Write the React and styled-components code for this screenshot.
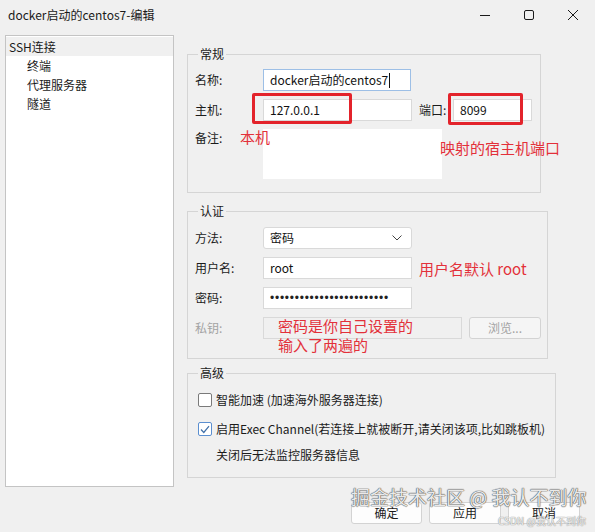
import React from "react";
import styled, { createGlobalStyle } from "styled-components";

const GlobalStyle = createGlobalStyle`
  html, body { margin: 0; padding: 0; background: #f0f0f0; }
  body { font-family: "Noto Sans CJK SC", "Noto Sans", sans-serif; font-size: 12px; color: #1b1b1b; }
  * { box-sizing: border-box; }
`;

const Window = styled.div`
  position: relative;
  width: 595px;
  height: 532px;
  background: #f0f0f0;
  overflow: hidden;
  border-top-right-radius: 8px;
`;

const TitleBar = styled.div`
  height: 30px;
  display: flex;
  align-items: center;
  padding-left: 8px;
`;

const Title = styled.div`
  flex: 1;
  font-size: 12px;
  line-height: 16px;
  color: #1a1a1a;
`;

const Controls = styled.div`
  display: flex;
  align-items: center;
  height: 30px;
`;

const CtrlBtn = styled.div`
  width: 44px;
  height: 30px;
  display: flex;
  align-items: center;
  justify-content: center;
`;

const Body = styled.div`
  display: flex;
  padding: 5px 0 0 5px;
`;

const Tree = styled.div`
  width: 169px;
  height: 452px;
  background: #fff;
  border: 1px solid #c4c4c4;
  padding-top: 1px;
`;

const TreeItem = styled.div`
  height: 19px;
  line-height: 19px;
  font-size: 12px;
  padding-left: ${(p) => (p.$child ? 21 : 3)}px;
  background: ${(p) => (p.$selected ? "#f0f0f0" : "transparent")};
`;

const Right = styled.div`
  margin-left: 13px;
  padding-top: 11px;
  display: flex;
  flex-direction: column;
`;

const Group = styled.fieldset`
  margin: ${(p) => p.$mt || 0}px 0 0 0;
  padding: 0 ${(p) => p.$pr || 0}px ${(p) => p.$pb}px ${(p) => p.$pl || 7}px;
  border: 1px solid #d5d5d5;
  width: ${(p) => p.$w}px;
  min-width: 0;
`;

const Legend = styled.legend`
  margin-left: 3px;
  padding: 0 2px;
  font-size: 12px;
  line-height: 16px;
  color: #1b1b1b;
`;

const Rows = styled.div`
  display: flex;
  flex-direction: column;
  gap: ${(p) => p.$gap || 8}px;
  padding-top: ${(p) => p.$pt || 7}px;
`;

const Row = styled.div`
  position: relative;
  display: flex;
  align-items: ${(p) => (p.$top ? "flex-start" : "center")};
  height: ${(p) => p.$h || 22}px;
`;

const Label = styled.div`
  width: 68px;
  flex: none;
  font-size: 12px;
  line-height: 16px;
  color: ${(p) => (p.$disabled ? "#a3a3a3" : "#1b1b1b")};
  margin-top: ${(p) => p.$mt || 0}px;
`;

const SideLabel = styled(Label)`
  width: 34px;
  margin-left: 7px;
`;

const Field = styled.div`
  width: ${(p) => p.$w}px;
  height: ${(p) => p.$h || 22}px;
  flex: none;
  background: ${(p) => (p.$disabled ? "#f0f0f0" : "#fff")};
  border: ${(p) => (p.$borderless ? "none" : `1px solid ${p.$focus ? "#9dbfe6" : "#d9d9d9"}`)};
  border-radius: ${(p) => (p.$round ? 3 : 0)}px;
  display: flex;
  align-items: center;
  padding-left: 6px;
  padding-right: 8px;
  font-size: 12px;
  line-height: 16px;
  color: #111;
`;

const Caret = styled.span`
  display: inline-block;
  width: 1px;
  height: 15px;
  background: #111;
  margin-left: 1px;
`;

const Chevron = styled.svg`
  margin-left: auto;
`;

const Dots = styled.span`
  font-family: "Liberation Sans", Arial, sans-serif;
  font-size: 12px;
  letter-spacing: 0.75px;
  color: #222;
`;

const Button = styled.div`
  width: ${(p) => p.$w || 72}px;
  height: 22px;
  flex: none;
  border: 1px solid #d3d3d3;
  border-radius: 3px;
  background: ${(p) => (p.$disabled ? "#f5f5f5" : "#fdfdfd")};
  color: ${(p) => (p.$disabled ? "#a3a3a3" : "#1b1b1b")};
  display: flex;
  align-items: center;
  justify-content: center;
  font-size: 12px;
  line-height: 16px;
  margin-left: ${(p) => p.$ml || 0}px;
`;

const RedBox = styled.div`
  position: absolute;
  left: ${(p) => p.$x}px;
  top: ${(p) => p.$y}px;
  width: ${(p) => p.$w}px;
  height: ${(p) => p.$h}px;
  border: 3px solid #e3232b;
  border-radius: 2px;
  pointer-events: none;
`;

const Note = styled.div`
  position: absolute;
  left: ${(p) => p.$x}px;
  top: ${(p) => p.$y}px;
  font-size: 15px;
  line-height: 19px;
  color: #e3303a;
  white-space: nowrap;
`;

const InlineNote = styled.div`
  margin-left: 7px;
  font-size: 15px;
  line-height: 19px;
  color: #e3303a;
  white-space: nowrap;
`;

const CheckList = styled.div`
  padding-top: 9px;
`;

const CheckRow = styled.div`
  display: flex;
  align-items: center;
  height: 20px;
  padding-left: ${(p) => (p.$indent ? 21 : 3)}px;
  margin-top: ${(p) => p.$mt || 0}px;
  font-size: 12px;
  line-height: 16px;
`;

const Box = styled.div`
  width: 14px;
  height: 14px;
  border: 1px solid ${(p) => (p.$checked ? "#5b8fd0" : "#7a7a7a")};
  border-radius: 2px;
  background: #fff;
  margin-right: 4px;
  display: flex;
  align-items: center;
  justify-content: center;
`;

const ButtonBar = styled.div`
  display: flex;
  gap: 7px;
  padding-left: 164px;
  margin-top: 24px;
`;

const Watermark = styled.div`
  position: absolute;
  left: 351px;
  top: 485px;
  font-size: 19px;
  line-height: 24px;
  color: rgba(255, 255, 255, 0.88);
  text-shadow: 0 0 1px #555, 0 0 1px #555, 0 0 1px #666;
  white-space: nowrap;
  pointer-events: none;
`;

const SmallMark = styled.div`
  position: absolute;
  left: 498px;
  top: 514px;
  font-size: 10px;
  line-height: 14px;
  color: rgba(255, 255, 255, 0.85);
  text-shadow: 0 0 1px #888, 0 0 1px #999;
  white-space: nowrap;
  pointer-events: none;
`;

export default function App() {
  return (
    <>
      <GlobalStyle />
      <Window>
        <TitleBar>
          <Title>docker启动的centos7-编辑</Title>
          <Controls>
            <CtrlBtn>
              <svg width="12" height="12" viewBox="0 0 12 12">
                <path d="M1 6.5h10" stroke="#1a1a1a" strokeWidth="1" />
              </svg>
            </CtrlBtn>
            <CtrlBtn>
              <svg width="12" height="12" viewBox="0 0 12 12">
                <rect x="1.5" y="1.5" width="9" height="9" rx="1.5" fill="none" stroke="#1a1a1a" strokeWidth="1" />
              </svg>
            </CtrlBtn>
            <CtrlBtn>
              <svg width="12" height="12" viewBox="0 0 12 12">
                <path d="M1 1l10 10M11 1L1 11" stroke="#1a1a1a" strokeWidth="1" />
              </svg>
            </CtrlBtn>
          </Controls>
        </TitleBar>
        <Body>
          <Tree>
            <TreeItem $selected>SSH连接</TreeItem>
            <TreeItem $child>终端</TreeItem>
            <TreeItem $child>代理服务器</TreeItem>
            <TreeItem $child>隧道</TreeItem>
          </Tree>
          <Right>
            <Group $w={354} $pb={13}>
              <Legend>常规</Legend>
              <Rows>
                <Row>
                  <Label>名称:</Label>
                  <Field $w={148} $focus>
                    docker启动的centos7<Caret />
                  </Field>
                </Row>
                <Row>
                  <Label>主机:</Label>
                  <Field $w={149}>127.0.0.1</Field>
                  <SideLabel>端口:</SideLabel>
                  <Field $w={79}>8099</Field>
                  <RedBox $x={57} $y={-6} $w={100} $h={31} />
                  <RedBox $x={253} $y={-6} $w={75} $h={32} />
                </Row>
                <Row $top $h={50}>
                  <Label $mt={1}>备注:</Label>
                  <Field $w={179} $h={50} $borderless />
                  <Note $x={45} $y={-2}>本机</Note>
                  <Note $x={245} $y={9}>映射的宿主机端口</Note>
                </Row>
              </Rows>
            </Group>

            <Group $w={361} $pb={19} $mt={10}>
              <Legend>认证</Legend>
              <Rows $pt={8}>
                <Row>
                  <Label>方法:</Label>
                  <Field $w={149} $round>
                    密码
                    <Chevron width="12" height="8" viewBox="0 0 12 8">
                      <path d="M1.5 1.5l4.5 4.5 4.5-4.5" fill="none" stroke="#444" strokeWidth="1" />
                    </Chevron>
                  </Field>
                </Row>
                <Row>
                  <Label>用户名:</Label>
                  <Field $w={149}>root</Field>
                  <InlineNote>用户名默认 root</InlineNote>
                </Row>
                <Row>
                  <Label>密码:</Label>
                  <Field $w={149}>
                    <Dots>{"•".repeat(24)}</Dots>
                  </Field>
                </Row>
                <Row>
                  <Label $disabled>私钥:</Label>
                  <Field $w={199} $disabled />
                  <Button $w={72} $ml={7} $disabled>浏览...</Button>
                  <Note $x={83} $y={-1}>
                    密码是你自己设置的
                    <br />
                    输入了两遍的
                  </Note>
                </Row>
              </Rows>
            </Group>

            <Group $w={369} $pb={12} $mt={6} $pl={7}>
              <Legend>高级</Legend>
              <CheckList>
                <CheckRow>
                  <Box />
                  智能加速 (加速海外服务器连接)
                </CheckRow>
                <CheckRow $mt={9}>
                  <Box $checked>
                    <svg width="10" height="9" viewBox="0 0 10 9">
                      <path d="M1 4.5l2.8 3L9 1.2" fill="none" stroke="#3f6fa8" strokeWidth="1.2" />
                    </svg>
                  </Box>
                  启用Exec Channel(若连接上就被断开,请关闭该项,比如跳板机)
                </CheckRow>
                <CheckRow $mt={6} $indent>关闭后无法监控服务器信息</CheckRow>
              </CheckList>
            </Group>

            <ButtonBar>
              <Button $w={71}>确定</Button>
              <Button $w={72}>应用</Button>
              <Button $w={72}>取消</Button>
            </ButtonBar>
          </Right>
        </Body>
        <Watermark>掘金技术社区 @ 我认不到你</Watermark>
        <SmallMark>CSDN @我认不到你</SmallMark>
      </Window>
    </>
  );
}
